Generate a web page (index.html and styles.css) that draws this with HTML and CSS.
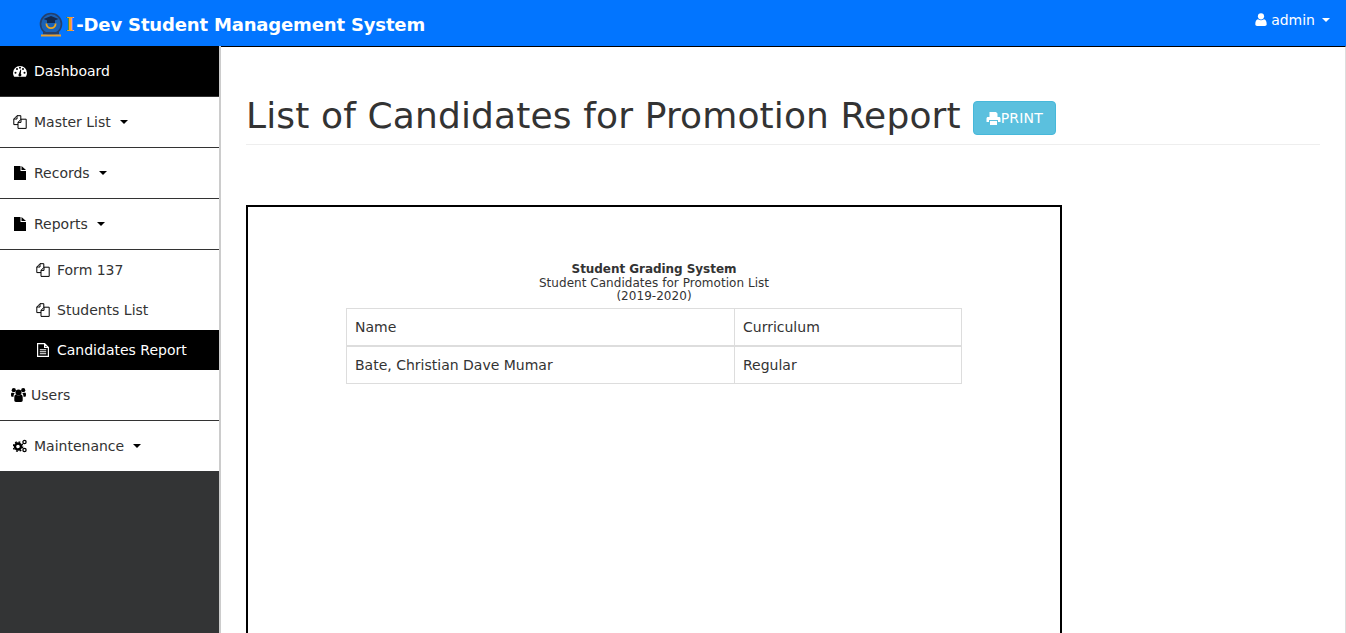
FILE: index.html
```html
<!DOCTYPE html>
<html lang="en">
<head>
    <meta charset="UTF-8">
    <title>List of Candidates for Promotion Report</title>
    <link rel="stylesheet" href="styles.css">
</head>
<body>
    <header class="navbar">
        <div class="brand">
            <svg class="brand-logo" viewBox="0 0 26 26">
                <circle cx="13" cy="12" r="10.5" fill="#1a62b8" stroke="#24406e" stroke-width="1.6"/>
                <path d="M7.500 11.500a5.500 5.500 0 0 0 11 0h-1.800a3.700 3.700 0 0 1-7.400 0z" fill="#f2a81d"/>
                <path d="M13 4l7.500 3-7.500 3-7.500-3z" fill="#12294f"/>
                <rect x="9" y="8" width="8" height="3" fill="#12294f"/>
                <rect x="5" y="20" width="16" height="2.500" fill="#28406a"/>
                <rect x="3" y="22.500" width="20" height="2" fill="#e8a030"/>
            </svg>
            <span class="brand-i">I</span><span>-Dev Student Management System</span>
        </div>
        <div class="user-menu">
            <svg class="icon-user" viewBox="0 0 12 13"><circle cx="6" cy="3.300" r="3.100"/><path d="M0.300 11.200c0-3 1-4.700 2.700-5 .8.600 1.800 1 3 1s2.200-.4 3-1c1.700.3 2.700 2 2.700 5 0 1.100-.8 1.700-1.800 1.700H2.100c-1 0-1.800-.6-1.800-1.700z"/></svg>
            <span>admin</span>
            <span class="caret caret-white"></span>
        </div>
    </header>
    <div class="wrapper">
        <nav class="sidebar">
            <a class="nav-item active">
                <svg class="icon" viewBox="0 0 14 12"><path fill-rule="evenodd" d="M7 1a7 7 0 0 0-7 7c0 1.300.3 2.500 1 3.500.1.200.3.300.5.300h11c.2 0 .4-.1.500-.3.700-1 1-2.200 1-3.500a7 7 0 0 0-7-7zM2.500 8.800a1 1 0 1 1 0-2 1 1 0 0 1 0 2zM4 5a1 1 0 1 1 0-2 1 1 0 0 1 0 2zm3-1.300a1 1 0 1 1 0-2 1 1 0 0 1 0 2zM8.400 9.800a1.500 1.500 0 1 1-2.600-.9L7.500 4.500l.7.200-.4 4.300c.4.100.6.400.6.800zM10 5a1 1 0 1 1 0-2 1 1 0 0 1 0 2zm1.500 3.800a1 1 0 1 1 0-2 1 1 0 0 1 0 2z"/></svg>
                <span>Dashboard</span>
            </a>
            <a class="nav-item">
                <svg class="icon" viewBox="0 0 14 14"><use href="#copy"/></svg>
                <span>Master List</span><span class="caret"></span>
            </a>
            <a class="nav-item">
                <svg class="icon" viewBox="0 0 14 14"><use href="#file"/></svg>
                <span>Records</span><span class="caret"></span>
            </a>
            <a class="nav-item">
                <svg class="icon" viewBox="0 0 14 14"><use href="#file"/></svg>
                <span>Reports</span><span class="caret"></span>
            </a>
            <a class="sub-item">
                <svg class="icon" viewBox="0 0 14 14"><use href="#copy"/></svg>
                <span>Form 137</span>
            </a>
            <a class="sub-item">
                <svg class="icon" viewBox="0 0 14 14"><use href="#copy"/></svg>
                <span>Students List</span>
            </a>
            <a class="sub-item active">
                <svg class="icon" viewBox="0 0 14 14"><path fill="none" stroke="currentColor" stroke-width="1.200" d="M1.600.6h7l3.800 3.800v9H1.600zM8.600.6v3.800h3.800"/><path stroke="currentColor" stroke-width="1.100" d="M3.800 6.700h6.400M3.800 8.700h6.400M3.800 10.700h6.400"/></svg>
                <span>Candidates Report</span>
            </a>
            <a class="nav-item users">
                <svg class="icon icon-users" viewBox="0 0 15 14"><circle cx="7.500" cy="4.500" r="3"/><circle cx="2.800" cy="2.200" r="2.100"/><circle cx="12.200" cy="2.200" r="2.100"/><path d="M3.300 9.500c0-1.900.8-3 1.700-3 .6.700 1.500 1.100 2.500 1.100s1.900-.4 2.500-1.100c.9 0 1.700 1.100 1.700 3v2.800c0 1-.7 1.700-1.600 1.700H4.900c-.9 0-1.600-.7-1.600-1.700zM0 6.200c0-1 .5-1.800 1.200-1.800.4.400 1 .6 1.600.6h1c-.6.800-1.200 1.600-1.300 3.700H1c-.6 0-1-.5-1-2.500zM15 6.200c0 2-.4 2.500-1 2.500h-1.500c-.1-2.100-.7-2.900-1.300-3.700h1c.6 0 1.200-.2 1.600-.6.700 0 1.200.8 1.200 1.800z"/></svg>
                <span>Users</span>
            </a>
            <a class="nav-item">
                <svg class="icon" viewBox="0 0 14 14"><use href="#gears"/></svg>
                <span>Maintenance</span><span class="caret"></span>
            </a>
        </nav>
        <main class="content">
            <div class="page-header">
                <h1>List of Candidates for Promotion Report</h1>
                <button class="btn-print">
                    <svg class="icon-print" viewBox="0 0 14 13"><path d="M3 0h6.500L11 1.500V5H3zM0 6.500C0 5.700.6 5 1.400 5h11.200c.8 0 1.400.7 1.400 1.500V10h-2.500V8h-9v2H0zM3.500 9h7v4h-7z"/></svg>PRINT
                </button>
            </div>
            <section class="report">
                <div class="report-title">
                    <strong>Student Grading System</strong><br>
                    Student Candidates for Promotion List<br>
                    (2019-2020)
                </div>
                <table class="report-table">
                    <thead>
                        <tr><th class="col-name">Name</th><th>Curriculum</th></tr>
                    </thead>
                    <tbody>
                        <tr><td>Bate, Christian Dave Mumar</td><td>Regular</td></tr>
                    </tbody>
                </table>
            </section>
        </main>
    </div>
    <svg class="defs" width="0" height="0">
        <symbol id="copy" viewBox="0 0 14 14">
            <path fill="none" stroke="currentColor" stroke-width="1" d="M5 9.600H.8V4L4 .7h3.800v3.500M5 13.400V7.400l3-3.200h5.200v9.200zM4 .7V4H.8M8 4.200v3.200H5"/>
        </symbol>
        <symbol id="file" viewBox="0 0 14 14">
            <path fill="currentColor" d="M1 0h6.500v5H13v9H1zM8.500 0L13 4H8.500z"/>
        </symbol>
        <symbol id="gears" viewBox="0 0 14 14">
            <circle cx="5" cy="7.500" r="3" fill="none" stroke="currentColor" stroke-width="2.400"/>
            <circle cx="5" cy="7.500" r="4.700" fill="none" stroke="currentColor" stroke-width="1.400" stroke-dasharray="1.800 1.900"/>
            <circle cx="11.500" cy="3" r="1.600" fill="none" stroke="currentColor" stroke-width="1.300"/>
            <circle cx="11.500" cy="11" r="1.600" fill="none" stroke="currentColor" stroke-width="1.300"/>
        </symbol>
    </svg>
</body>
</html>
```
FILE: styles.css
```css
html, body {
    height: 100%;
}
body {
    margin: 0;
    font-family: "DejaVu Sans", Verdana, sans-serif;
    font-size: 14px;
    color: #333333;
    background-color: #ffffff;
    display: flex;
    flex-direction: column;
    overflow: hidden;
}
.defs {
    position: absolute;
}
.navbar {
    height: 46px;
    flex-shrink: 0;
    background-color: #0275ff;
    color: #ffffff;
    display: flex;
    align-items: center;
    justify-content: space-between;
    padding: 0 16px 0 38px;
}
.brand {
    display: flex;
    align-items: center;
    font-size: 18px;
    font-weight: bold;
    letter-spacing: -0.16px;
    margin-top: 3px;
}
.brand-logo {
    width: 26px;
    height: 26px;
    margin-right: 2px;
}
.brand-i {
    font-family: "DejaVu Serif", serif;
    color: #f7a01f;
    padding-right: 2px;
}
.user-menu {
    display: flex;
    align-items: center;
    margin-top: -7px;
}
.icon-user {
    width: 12px;
    height: 13px;
    fill: #ffffff;
    margin-right: 4px;
}
.caret {
    display: inline-block;
    width: 0;
    height: 0;
    margin-left: 9px;
    border-top: 4px solid #000000;
    border-left: 4px solid transparent;
    border-right: 4px solid transparent;
}
.caret-white {
    border-top-color: #ffffff;
    margin-left: 7px;
}
.wrapper {
    flex: 1;
    display: flex;
    min-height: 0;
}
.sidebar {
    width: 219px;
    flex-shrink: 0;
    background-color: #333435;
    border-right: 2px solid #cccccc;
}
.nav-item,
.sub-item {
    display: flex;
    align-items: center;
    background-color: #ffffff;
    color: #333333;
}
.nav-item {
    height: 50px;
    padding-left: 13px;
    border-bottom: 1px solid #333333;
}
.sub-item {
    height: 40px;
    padding-left: 36px;
}
.nav-item.active,
.sub-item.active {
    background-color: #000000;
    color: #ffffff;
}
.nav-item.users {
    padding-left: 11px;
}
.nav-item:last-child {
    border-bottom: none;
}
.icon {
    width: 14px;
    height: 14px;
    margin-right: 7px;
    fill: currentColor;
    color: #000000;
}
.active .icon {
    color: #ffffff;
}
.icon-users {
    width: 15px;
    height: 14px;
    margin-right: 5px;
}
.content {
    flex: 1;
    min-width: 0;
    padding: 0 25px;
    border-top: 1px solid #000000;
    border-right: 1px solid #dddddd;
    overflow: hidden;
}
.page-header {
    display: flex;
    align-items: center;
    margin-top: 47px;
    padding-bottom: 6px;
    border-bottom: 1px solid #eeeeee;
}
.page-header h1 {
    margin: 0;
    font-size: 36px;
    font-weight: normal;
    line-height: 44px;
    letter-spacing: 0.13px;
}
.btn-print {
    display: flex;
    align-items: center;
    height: 34px;
    margin: 4px 0 0 12px;
    padding: 0 12px;
    font-family: inherit;
    font-size: 14px;
    letter-spacing: 0.2px;
    color: #ffffff;
    background-color: #5bc0de;
    border: 1px solid #46b8da;
    border-radius: 4px;
}
.icon-print {
    width: 15px;
    height: 13px;
    fill: #ffffff;
}
.report {
    width: 812px;
    height: 900px;
    margin-top: 60px;
    border: 2px solid #000000;
    padding-top: 56px;
}
.report-title {
    text-align: center;
    font-size: 12px;
    line-height: 13.500px;
    letter-spacing: 0.04px;
}
.report-title strong {
    letter-spacing: -0.05px;
}
.report-table {
    width: 616px;
    margin: 4px auto 0;
    border-collapse: collapse;
}
.report-table th,
.report-table td {
    height: 20px;
    padding: 8px;
    font-weight: normal;
    text-align: left;
    line-height: 20px;
    border: 1px solid #dddddd;
}
.report-table thead th {
    border-bottom-width: 2px;
}
.col-name {
    width: 371px;
}
```
